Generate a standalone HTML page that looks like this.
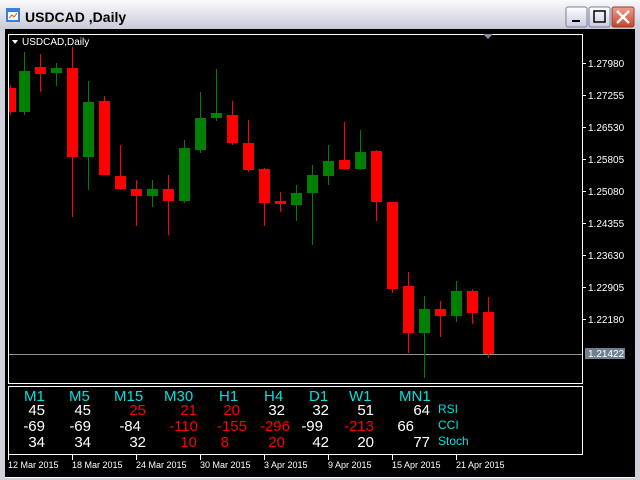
<!DOCTYPE html><html><head><style>
body{margin:0;width:640px;height:480px;overflow:hidden;background:#d4d0c8;font-family:"Liberation Sans",sans-serif}
#win{position:absolute;left:0;top:0;width:640px;height:480px;background:linear-gradient(#f4f4f8,#d6d6e0 30px,#c8c8d4);}
</style></head><body><div id="win">
<svg width="640" height="480" style="position:absolute;left:0;top:0" font-family="Liberation Sans, sans-serif">
<rect x="0" y="0" width="640" height="480" fill="#cfd0da"/>
<rect x="0" y="0" width="640" height="29" fill="url(#tg)"/>
<defs><linearGradient id="tg" x1="0" y1="0" x2="0" y2="1"><stop offset="0" stop-color="#fafafc"/><stop offset="1" stop-color="#c9cad6"/></linearGradient>
<linearGradient id="bg" x1="0" y1="0" x2="0" y2="1"><stop offset="0" stop-color="#fff"/><stop offset="1" stop-color="#c8cbe0"/></linearGradient>
<linearGradient id="rg" x1="0" y1="0" x2="0" y2="1"><stop offset="0" stop-color="#f0a090"/><stop offset="1" stop-color="#c8402a"/></linearGradient></defs>
<rect x="6" y="8" width="14" height="14" fill="#3a7fd8"/><rect x="8" y="12" width="10" height="8" fill="#fff"/><path d="M9 18 l3-3 2 2 3-4" stroke="#e05020" fill="none"/>
<text x="25" y="22" font-size="14" font-weight="bold" fill="#000">USDCAD ,Daily</text>
<rect x="566" y="7" width="21" height="20" rx="2" fill="url(#bg)" stroke="#7880a0"/><rect x="572" y="20" width="8" height="2" fill="#000"/>
<rect x="589" y="7" width="21" height="20" rx="2" fill="url(#bg)" stroke="#7880a0"/><rect x="594" y="11" width="11" height="11" fill="none" stroke="#000" stroke-width="1.5"/>
<rect x="612" y="7" width="22" height="20" rx="2" fill="url(#rg)" stroke="#904030"/><path d="M617 11 l12 12 M629 11 l-12 12" stroke="#fff" stroke-width="2.5"/>
<rect x="5" y="29" width="630" height="449" fill="#000"/>
<rect x="8.5" y="34.5" width="574" height="349" fill="none" stroke="#fff"/>
<rect x="8.5" y="386.5" width="574" height="68" fill="none" stroke="#fff"/>
<path d="M483 34 l5 5 5-5z" fill="#8090a0"/>
<path d="M12 40 l6 0 -3 4z" fill="#fff"/>
<text x="22" y="45" font-size="10" fill="#fff">USDCAD,Daily</text>
<line x1="9" y1="354.5" x2="582" y2="354.5" stroke="#909090"/>
<g id="c"></g>
<g font-size="10" fill="#fff">
<g stroke="#fff"><line x1="582" y1="63.5" x2="586" y2="63.5"/><line x1="582" y1="95.5" x2="586" y2="95.5"/><line x1="582" y1="127.5" x2="586" y2="127.5"/><line x1="582" y1="159.5" x2="586" y2="159.5"/><line x1="582" y1="191.5" x2="586" y2="191.5"/><line x1="582" y1="223.5" x2="586" y2="223.5"/><line x1="582" y1="255.5" x2="586" y2="255.5"/><line x1="582" y1="287.5" x2="586" y2="287.5"/><line x1="582" y1="319.5" x2="586" y2="319.5"/></g>
<text x="588" y="67">1.27980</text><text x="588" y="99">1.27255</text><text x="588" y="131">1.26530</text><text x="588" y="163">1.25805</text><text x="588" y="195">1.25080</text><text x="588" y="227">1.24355</text><text x="588" y="259">1.23630</text><text x="588" y="291">1.22905</text><text x="588" y="323">1.22180</text>
<rect x="585" y="348" width="40" height="11" fill="#708090"/><text x="588" y="357">1.21422</text>
</g>
<g font-size="15" fill="#00e0e0"><text x="24" y="401">M1</text><text x="69" y="401">M5</text><text x="114" y="401">M15</text><text x="164" y="401">M30</text><text x="219" y="401">H1</text><text x="264" y="401">H4</text><text x="309" y="401">D1</text><text x="349" y="401">W1</text><text x="399" y="401">MN1</text></g>
<g font-size="15" text-anchor="end">
<text x="45" y="415" fill="#fff">45</text><text x="91" y="415" fill="#fff">45</text><text x="146" y="415" fill="#f00">25</text><text x="197" y="415" fill="#f00">21</text><text x="240" y="415" fill="#f00">20</text><text x="285" y="415" fill="#fff">32</text><text x="329" y="415" fill="#fff">32</text><text x="374" y="415" fill="#fff">51</text><text x="430" y="415" fill="#fff">64</text>
<text x="45" y="431" fill="#fff">-69</text><text x="91" y="431" fill="#fff">-69</text><text x="141" y="431" fill="#fff">-84</text><text x="198" y="431" fill="#f00">-110</text><text x="247" y="431" fill="#f00">-155</text><text x="290" y="431" fill="#f00">-296</text><text x="323" y="431" fill="#fff">-99</text><text x="374" y="431" fill="#f00">-213</text><text x="414" y="431" fill="#fff">66</text>
<text x="45" y="447" fill="#fff">34</text><text x="91" y="447" fill="#fff">34</text><text x="146" y="447" fill="#fff">32</text><text x="197" y="447" fill="#f00">10</text><text x="229" y="447" fill="#f00">8</text><text x="285" y="447" fill="#f00">20</text><text x="329" y="447" fill="#fff">42</text><text x="374" y="447" fill="#fff">20</text><text x="430" y="447" fill="#fff">77</text></g>
<g font-size="12" fill="#00e0e0"><text x="438" y="413">RSI</text><text x="438" y="429">CCI</text><text x="438" y="445">Stoch</text></g>
<g stroke="#fff"><line x1="8.5" y1="455" x2="8.5" y2="460"/><line x1="72.5" y1="455" x2="72.5" y2="460"/><line x1="136.5" y1="455" x2="136.5" y2="460"/><line x1="200.5" y1="455" x2="200.5" y2="460"/><line x1="264.5" y1="455" x2="264.5" y2="460"/><line x1="328.5" y1="455" x2="328.5" y2="460"/><line x1="392.5" y1="455" x2="392.5" y2="460"/><line x1="456.5" y1="455" x2="456.5" y2="460"/></g>
<g font-size="9" fill="#fff"><text x="8" y="468">12 Mar 2015</text><text x="72" y="468">18 Mar 2015</text><text x="136" y="468">24 Mar 2015</text><text x="200" y="468">30 Mar 2015</text><text x="264" y="468">3 Apr 2015</text><text x="328" y="468">9 Apr 2015</text><text x="392" y="468">15 Apr 2015</text><text x="456" y="468">21 Apr 2015</text></g>
<line x1="5" y1="477.5" x2="635" y2="477.5" stroke="#fff"/>
</svg>
<svg width="640" height="480" style="position:absolute;left:0;top:0">
<defs><clipPath id="cp"><rect x="9" y="35" width="573" height="348"/></clipPath></defs>
<g clip-path="url(#cp)">
<!-- candles: x, bodyTop, bodyBot, high, low, color -->
<g stroke-width="1">
<line x1="10.5" y1="85" x2="10.5" y2="115" stroke="#f00"/><rect x="5" y="88" width="11" height="24" fill="#f00"/>
<line x1="24.5" y1="52" x2="24.5" y2="115" stroke="#008000"/><rect x="19" y="71" width="11" height="41" fill="#008000"/>
<line x1="40.5" y1="54" x2="40.5" y2="92" stroke="#f00"/><rect x="35" y="67" width="11" height="7" fill="#f00"/>
<line x1="56.5" y1="63" x2="56.5" y2="86" stroke="#008000"/><rect x="51" y="68" width="11" height="5" fill="#008000"/>
<line x1="72.5" y1="47" x2="72.5" y2="217" stroke="#f00"/><rect x="67" y="68" width="11" height="89" fill="#f00"/>
<line x1="88.5" y1="81" x2="88.5" y2="190" stroke="#008000"/><rect x="83" y="102" width="11" height="55" fill="#008000"/>
<line x1="104.5" y1="96" x2="104.5" y2="175" stroke="#f00"/><rect x="99" y="101" width="11" height="74" fill="#f00"/>
<line x1="120.5" y1="145" x2="120.5" y2="190" stroke="#f00"/><rect x="115" y="176" width="11" height="13" fill="#f00"/>
<line x1="136.5" y1="180" x2="136.5" y2="226" stroke="#f00"/><rect x="131" y="189" width="11" height="7" fill="#f00"/>
<line x1="152.5" y1="180" x2="152.5" y2="207" stroke="#008000"/><rect x="147" y="189" width="11" height="7" fill="#008000"/>
<line x1="168.5" y1="175" x2="168.5" y2="235" stroke="#f00"/><rect x="163" y="189" width="11" height="12" fill="#f00"/>
<line x1="184.5" y1="140" x2="184.5" y2="203" stroke="#008000"/><rect x="179" y="148" width="11" height="53" fill="#008000"/>
<line x1="200.5" y1="92" x2="200.5" y2="153" stroke="#008000"/><rect x="195" y="118" width="11" height="32" fill="#008000"/>
<line x1="216.5" y1="69" x2="216.5" y2="121" stroke="#008000"/><rect x="211" y="113" width="11" height="5" fill="#008000"/>
<line x1="232.5" y1="101" x2="232.5" y2="145" stroke="#f00"/><rect x="227" y="115" width="11" height="28" fill="#f00"/>
<line x1="248.5" y1="120" x2="248.5" y2="172" stroke="#f00"/><rect x="243" y="143" width="11" height="27" fill="#f00"/>
<line x1="264.5" y1="168" x2="264.5" y2="226" stroke="#f00"/><rect x="259" y="169" width="11" height="34" fill="#f00"/>
<line x1="280.5" y1="192" x2="280.5" y2="212" stroke="#f00"/><rect x="275" y="201" width="11" height="3" fill="#f00"/>
<line x1="296.5" y1="185" x2="296.5" y2="221" stroke="#008000"/><rect x="291" y="193" width="11" height="12" fill="#008000"/>
<line x1="312.5" y1="165" x2="312.5" y2="245" stroke="#008000"/><rect x="307" y="175" width="11" height="18" fill="#008000"/>
<line x1="328.5" y1="145" x2="328.5" y2="185" stroke="#008000"/><rect x="323" y="161" width="11" height="15" fill="#008000"/>
<line x1="344.5" y1="122" x2="344.5" y2="170" stroke="#f00"/><rect x="339" y="160" width="11" height="9" fill="#f00"/>
<line x1="360.5" y1="130" x2="360.5" y2="170" stroke="#008000"/><rect x="355" y="152" width="11" height="17" fill="#008000"/>
<line x1="376.5" y1="150" x2="376.5" y2="221" stroke="#f00"/><rect x="371" y="151" width="11" height="51" fill="#f00"/>
<line x1="392.5" y1="202" x2="392.5" y2="293" stroke="#f00"/><rect x="387" y="202" width="11" height="87" fill="#f00"/>
<line x1="408.5" y1="272" x2="408.5" y2="353" stroke="#f00"/><rect x="403" y="286" width="11" height="47" fill="#f00"/>
<line x1="424.5" y1="296" x2="424.5" y2="378" stroke="#008000"/><rect x="419" y="309" width="11" height="24" fill="#008000"/>
<line x1="440.5" y1="301" x2="440.5" y2="337" stroke="#f00"/><rect x="435" y="309" width="11" height="7" fill="#f00"/>
<line x1="456.5" y1="281" x2="456.5" y2="322" stroke="#008000"/><rect x="451" y="291" width="11" height="25" fill="#008000"/>
<line x1="472.5" y1="289" x2="472.5" y2="324" stroke="#f00"/><rect x="467" y="291" width="11" height="22" fill="#f00"/>
<line x1="488.5" y1="297" x2="488.5" y2="358" stroke="#f00"/><rect x="483" y="312" width="11" height="42" fill="#f00"/>
</g></g></svg>
</div></body></html>
